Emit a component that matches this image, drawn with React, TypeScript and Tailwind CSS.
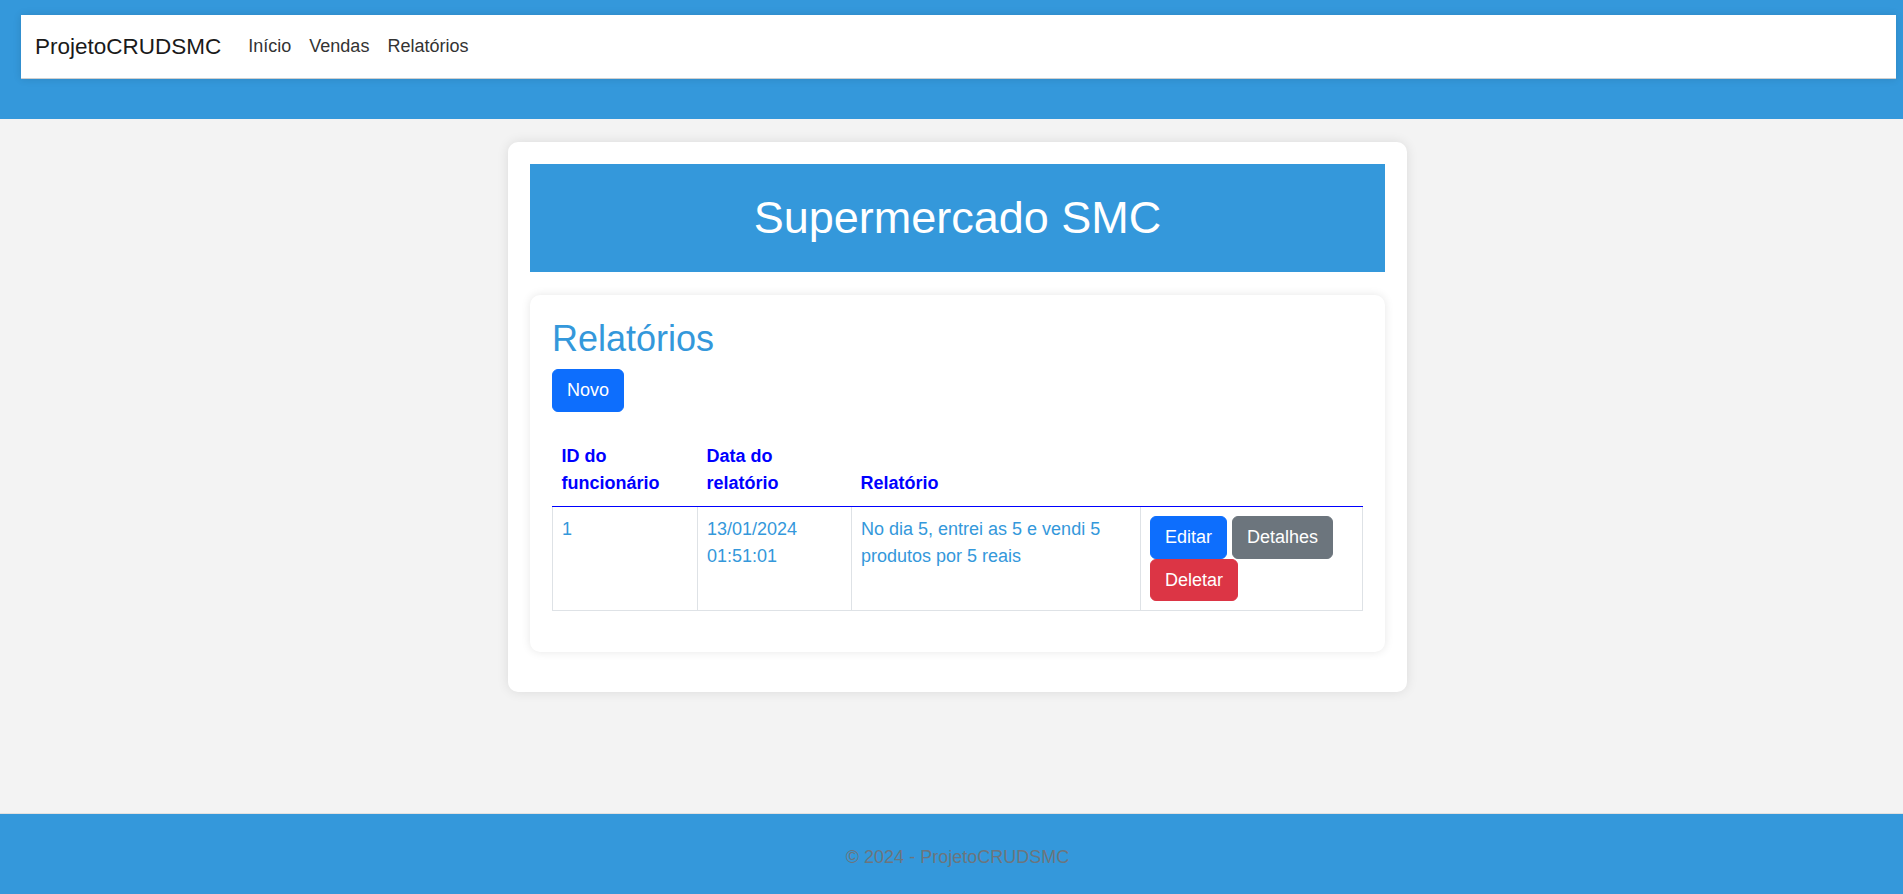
export default function App() {
  return (
    <div className="min-h-screen flex flex-col bg-[#f3f3f3] font-['Liberation_Sans',Arial,sans-serif] text-[18px] leading-[1.5] text-[#212529]">
      <header className="bg-[#3498db] pt-[15px] pb-[40px] pl-[21px] pr-[7px]">
        <nav className="h-[64px] bg-white border-b border-[#cfcfcf] shadow-[0_0_8px_rgba(0,0,0,0.12)] flex items-center pl-[14px]">
          <span className="text-[22.5px] text-[#1a1a1a] mr-[27px]">ProjetoCRUDSMC</span>
          <div className="flex gap-[18px] text-[#333]">
            <span>Início</span>
            <span>Vendas</span>
            <span>Relatórios</span>
          </div>
        </nav>
      </header>

      <main className="flex-1 flex justify-center items-start pl-[12px] pt-[23px]">
        <div className="w-[899px] bg-white rounded-[10px] shadow-[0_0_12px_rgba(0,0,0,0.1)] p-[22px] pb-[40px]">
          <div className="h-[108px] bg-[#3498db] flex items-center justify-center">
            <h1 className="text-[45px] leading-[1.2] text-white">Supermercado SMC</h1>
          </div>

          <div className="mt-[23px] bg-white rounded-[10px] shadow-[0_0_10px_rgba(0,0,0,0.1)] px-[22px] pt-[22px] pb-[41px]">
            <h2 className="text-[36px] leading-[1.2] text-[#3498db] mb-[9px]">Relatórios</h2>
            <button className="h-[43px] px-[14px] rounded-[6px] border border-[#0d6efd] bg-[#0d6efd] text-white">Novo</button>

            <table className="mt-[22px] w-[810px] table-fixed border-collapse">
              <thead>
                <tr>
                  <th className="w-[145px] p-[9px] text-left align-bottom font-bold text-[#0000ff] border-b border-[#0000ff]">ID do<br />funcionário</th>
                  <th className="w-[154px] p-[9px] text-left align-bottom font-bold text-[#0000ff] border-b border-[#0000ff]">Data do<br />relatório</th>
                  <th className="w-[289px] p-[9px] text-left align-bottom font-bold text-[#0000ff] border-b border-[#0000ff]">Relatório</th>
                  <th className="w-[222px] p-[9px] text-left align-bottom font-bold text-[#0000ff] border-b border-[#0000ff]"></th>
                </tr>
              </thead>
              <tbody>
                <tr>
                  <td className="border-x border-b border-[#dee2e6] p-[9px] align-top text-[#3498db]">1</td>
                  <td className="border-x border-b border-[#dee2e6] p-[9px] align-top text-[#3498db]">13/01/2024<br />01:51:01</td>
                  <td className="border-x border-b border-[#dee2e6] p-[9px] align-top text-[#3498db]">No dia 5, entrei as 5 e vendi 5<br />produtos por 5 reais</td>
                  <td className="border-x border-b border-[#dee2e6] p-[9px] align-top">
                    <div className="flex flex-wrap gap-x-[5px]">
                      <button className="h-[43px] px-[14px] rounded-[6px] border border-[#0d6efd] bg-[#0d6efd] text-white">Editar</button>
                      <button className="h-[43px] px-[14px] rounded-[6px] border border-[#6c757d] bg-[#6c757d] text-white">Detalhes</button>
                      <button className="h-[42px] px-[14px] rounded-[6px] border border-[#dc3545] bg-[#dc3545] text-white">Deletar</button>
                    </div>
                  </td>
                </tr>
              </tbody>
            </table>
          </div>
        </div>
      </main>

      <footer className="h-[81px] bg-[#3498db] border-t border-[#e0e0e0] flex items-center justify-center pl-[12px] pt-[6px] text-[#6c757d]">
        © 2024 - ProjetoCRUDSMC
      </footer>
    </div>
  );
}
